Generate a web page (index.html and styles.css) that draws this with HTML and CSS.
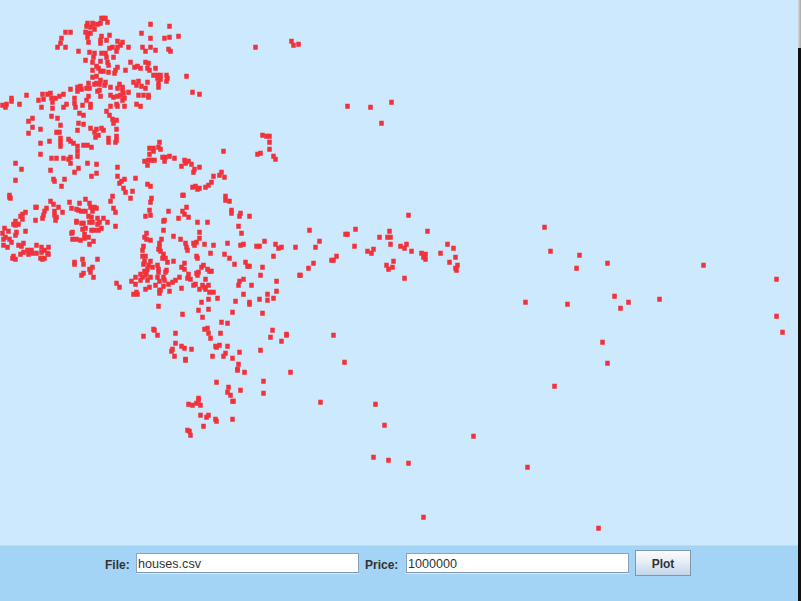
FILE: index.html
```html
<!DOCTYPE html>
<html lang="en">
<head>
    <meta charset="UTF-8">
    <title>House Prices</title>
    <link rel="stylesheet" href="styles.css">
</head>
<body>
    <div class="window">
        <div class="main">
            <canvas id="plot" class="plot" width="798" height="545"></canvas>
            <div class="controls">
                <label class="field-label file-label" for="file">File:</label>
                <input class="field" type="text" id="file" value="houses.csv">
                <label class="field-label price-label" for="price">Price:</label>
                <input class="field" type="text" id="price" value="1000000">
                <button class="plot-button">Plot</button>
            </div>
        </div>
        <div class="edge">
            <div class="edge-top"></div>
        </div>
    </div>
    <script src="script.js"></script>
</body>
</html>
```

FILE: styles.css
```css
html, body {
    margin: 0;
    padding: 0;
    overflow: hidden;
}
.window {
    display: flex;
    width: 801px;
    height: 601px;
    font-family: "Liberation Sans", Arial, sans-serif;
}
.main {
    width: 798px;
    display: flex;
    flex-direction: column;
}
.plot {
    display: block;
    background-color: #cde9fd;
}
.controls {
    flex: 1;
    display: flex;
    align-items: flex-start;
    justify-content: flex-start;
    padding: 4px 0 0 105px;
    background-color: #a3d4f5;
    border-top: 1px solid #b5dcf8;
    box-sizing: border-box;
}
.field-label {
    margin-top: 8px;
    font-size: 12px;
    font-weight: bold;
    color: #333;
}
.file-label {
    width: 31px;
}
.price-label {
    width: 41px;
}
.field {
    width: 223px;
    height: 20px;
    margin: 3px 6px 0 0;
    padding: 2px 1px 0;
    border: 1px solid #8ba3bc;
    border-bottom-color: #7f96ad;
    box-shadow: 0 1px 0 #d5ebfb;
    box-sizing: border-box;
    background-color: white;
    font-family: "Liberation Sans", Arial, sans-serif;
    font-size: 12.6px;
    color: #333;
}
.plot-button {
    width: 56px;
    height: 26px;
    padding: 1px 0 0;
    border: 1px solid #7f97ae;
    background: linear-gradient(#fbfcfe, #e6eef6 45%, #c3d5e7);
    font-family: "Liberation Sans", Arial, sans-serif;
    font-size: 12px;
    font-weight: bold;
    color: #333;
}
.edge {
    width: 3px;
    background-color: #111;
}
.edge-top {
    height: 48px;
    background: linear-gradient(to right, #d8d8d8, #a8a8a8);
}
```

FILE: script.js
```js
// house locations, pixel centres
const points = [
    [103,18],[101,18],[105,18],[107,22],[100,23],[97,24],[93,24],[92,23],[87,23],[86,26],[90,27],[94,29],[85,32],[88,33],[90,33],[87,37],[88,42],
    [65,32],[70,32],[61,38],[60,43],[57,47],[65,47],[78,51],[101,36],[100,40],[100,43],[109,35],[106,40],[117,41],[122,42],[120,45],[117,47],[116,51],[112,47],[109,48],[128,47],
    [89,52],[94,53],[93,57],[92,62],[101,53],[105,53],[106,57],[107,62],[108,65],[113,57],[85,60],[100,61],[96,66],[98,68],
    [92,70],[100,71],[103,71],[108,72],[114,73],[115,70],[117,67],[125,70],[130,62],[134,67],[137,66],[140,68],[145,62],[148,63],[147,68],[149,70],[155,68],
    [150,24],[169,26],[141,33],[150,38],[164,38],[169,37],[178,36],[142,47],[150,47],[145,51],[155,50],[168,49],[170,51],
    [153,75],[157,75],[160,75],[166,75],[186,76],[157,78],[160,79],[167,78],[166,81],[158,83],[158,87],[147,82],[133,82],[138,81],[136,85],[141,86],[145,88],[192,92],[199,94],
    [92,77],[96,76],[100,80],[96,83],[99,84],[105,82],[104,85],[88,83],[94,84],[99,90],[97,91],[100,96],[110,87],[86,88],[89,88],[80,86],[77,87],[77,91],[81,89],[70,89],
    [119,84],[122,87],[117,88],[122,90],[123,93],[128,92],[120,95],[117,96],[110,95],[113,97],[124,98],[122,100],[138,95],[143,95],[148,95],[148,97],
    [88,96],[86,100],[82,105],[90,104],[90,107],[74,98],[74,103],[75,107],[66,104],[63,107],
    [50,93],[47,94],[51,98],[55,98],[59,96],[63,94],[52,102],[52,108],[42,94],[43,99],[38,100],[26,95],[11,98],[11,101],[19,104],[6,104],[2,105],[5,107],[41,107],
    [116,104],[136,104],[140,106],[124,106],[117,106],[110,106],[106,111],[109,115],[112,119],[116,120],[113,123],
    [79,113],[83,115],[78,123],[83,124],[77,130],[90,128],[96,129],[101,128],[103,130],[94,132],[98,135],[95,137],[116,129],[116,136],[116,140],[115,142],[108,138],[108,142],
    [51,116],[57,118],[28,121],[32,118],[32,127],[28,133],[40,129],[60,125],[56,132],[59,132],[60,138],[60,142],[40,143],[49,141],[60,146],[68,139],[70,141],[73,143],[77,146],[83,145],[87,145],[91,147],[149,148],[153,148],[159,142],[158,147],[160,149],
    [40,154],[51,158],[56,158],[63,158],[68,159],[70,157],[70,163],[77,156],[77,151],[15,163],[21,169],[50,170],[78,168],[74,172],[87,163],[96,164],[96,173],[91,176],[15,180],[53,179],[54,181],[64,179],[61,186],
    [117,167],[117,176],[135,178],[124,179],[121,181],[119,183],[123,188],[125,192],[132,191],[130,198],[112,196],[110,201],[113,208],[115,212],[115,226],
    [147,184],[150,186],[151,198],[150,202],[149,210],[145,216],[150,215],[168,211],[182,195],[183,195],[186,207],[182,211],[184,214],[188,217],[178,218],[164,220],[163,221],[197,222],[163,230],
    [153,151],[149,154],[144,161],[148,160],[151,160],[154,160],[147,165],[162,157],[165,157],[169,156],[174,158],[164,161],[184,160],[188,161],[185,163],[181,166],[191,164],[194,169],[193,172],[199,167],
    [195,186],[192,187],[197,189],[199,188],
    [69,202],[79,203],[85,199],[89,203],[90,207],[94,207],[96,208],[92,211],[71,208],[76,209],[78,210],[81,211],[85,211],
    [50,201],[53,204],[58,207],[54,211],[62,212],[54,215],[56,217],[55,220],[46,208],[44,211],[43,215],[42,218],[35,207],[36,207],[35,220],[25,212],[22,214],[20,216],[22,219],[9,195],[9,197],[10,198],
    [15,221],[18,224],[13,224],[15,225],[4,228],[8,231],[2,233],[16,232],[15,235],[25,231],[5,237],[3,239],[9,239],[11,242],[3,245],[7,247],
    [23,243],[18,245],[21,246],[36,245],[41,247],[48,247],[27,250],[31,250],[23,252],[20,254],[28,254],[32,253],[36,253],[41,252],[44,250],[47,253],[48,254],[40,258],[44,258],[42,259],[13,256],[12,258],[15,259],
    [76,221],[76,222],[81,223],[83,223],[89,222],[92,222],[97,218],[103,218],[107,222],[99,222],[91,217],[88,216],[97,224],[82,229],[85,228],[91,230],[94,230],[98,230],[101,228],[72,232],[71,233],[84,234],[88,237],[72,239],[76,239],[80,240],[84,238],[93,241],[89,244],
    [74,262],[74,264],[82,259],[83,264],[97,259],[89,269],[92,267],[90,272],[93,277],[83,273],[81,275],[116,283],[119,287],
    [207,222],[238,226],[241,233],[199,232],[199,238],[173,236],[180,239],[146,233],[144,237],[146,239],[150,240],[161,239],[159,243],[159,247],[143,246],[142,250],[142,256],[145,256],[158,249],[160,251],[163,254],[162,258],[165,258],[167,262],[173,261],[144,261],[143,264],[150,261],[148,265],[152,267],[157,265],[158,269],[158,272],[147,269],[144,271],[146,273],[140,274],[135,277],[140,280],[142,277],[145,275],[150,277],[147,280],[131,281],[135,284],[157,277],[159,281],[163,277],[164,280],[166,270],[165,272],[155,285],[149,287],[145,289],
    [133,294],[136,292],[137,294],[159,290],[160,290],[159,293],[169,291],[163,286],[168,284],[172,282],[175,280],[179,277],[181,288],[158,306],[184,263],[181,267],[184,269],[188,274],[187,278],[190,279],[185,243],[186,247],[187,250],[193,243],[194,245],[196,242],[204,244],[213,245],[227,243],[240,245],[243,244],[256,246],[259,246],[264,241],[275,244],[278,248],[281,247],[295,247],
    [210,253],[224,254],[229,258],[234,264],[245,262],[247,266],[249,266],[262,267],[273,256],[260,275],[196,256],[197,258],[203,265],[201,267],[207,269],[209,271],[211,271],[198,272],[196,273],[197,275],[205,279],[195,284],[193,285],[199,289],[202,285],[204,287],[205,289],[208,285],[209,292],[213,292],[243,279],[239,281],[238,285],[251,285],[243,294],[276,281],[267,294],[276,291],[267,300],[273,298],[259,299],[249,302],[249,304],[235,301],[217,298],[208,299],[201,302],[208,309],[198,310],[182,314],[202,317],[232,312],[262,313],[299,275],
    [221,322],[227,323],[204,329],[207,328],[208,333],[210,338],[220,333],[175,333],[153,329],[154,330],[143,336],[157,335],[272,330],[270,337],[286,334],[286,335],[281,341],[175,343],[172,349],[171,351],[181,346],[184,348],[191,349],[215,346],[216,347],[219,345],[227,346],[239,352],[225,353],[223,356],[212,356],[232,358],[174,356],[185,359],[238,364],[237,369],[260,350],
    [185,360],[237,370],[244,372],[290,372],[216,382],[263,381],[228,387],[227,392],[230,395],[240,390],[263,393],[233,401],[232,401],[320,402],[198,398],[198,400],[196,403],[188,404],[192,405],[200,405],[200,415],[208,415],[206,417],[215,419],[216,421],[232,419],[203,426],[187,430],[189,431],[190,435],
    [262,135],[266,136],[269,136],[269,142],[269,149],[257,154],[260,153],[273,156],[275,159],[223,151],[221,172],[219,175],[224,177],[213,176],[211,182],[208,185],[205,187],[225,196],[225,200],[229,201],[231,210],[231,213],[240,213],[239,216],[249,216],[309,230],
    [408,215],[355,229],[345,234],[347,234],[389,231],[427,231],[319,241],[315,247],[354,246],[379,237],[387,237],[390,237],[390,244],[367,251],[371,253],[373,249],[400,246],[404,248],[406,244],[411,251],[421,253],[425,254],[423,257],[425,259],[440,253],[447,244],[453,248],[455,257],[449,262],[457,265],[455,268],[456,270],[336,256],[331,260],[333,260],[313,263],[308,268],[300,275],[386,265],[388,269],[392,267],[393,261],[404,278],
    [255,47],[291,41],[293,45],[298,44],[347,106],[370,107],[391,102],[381,123],[333,335],[344,362],
    [544,227],[550,251],[579,255],[576,268],[607,263],[703,265],[776,279],[525,302],[567,304],[614,296],[620,308],[628,302],[659,299],[776,316],[782,332],[602,342],[607,363],[554,386],[375,404],[384,425],[473,436],[373,457],[388,460],[408,463],[527,467],[423,517],[598,528]
];

const ctx = document.getElementById('plot').getContext('2d');
ctx.fillStyle = '#f2323a';
points.forEach(p => {
    ctx.fillRect(p[0] - 1.75, p[1] - 2.25, 4.5, 5);
});
```
